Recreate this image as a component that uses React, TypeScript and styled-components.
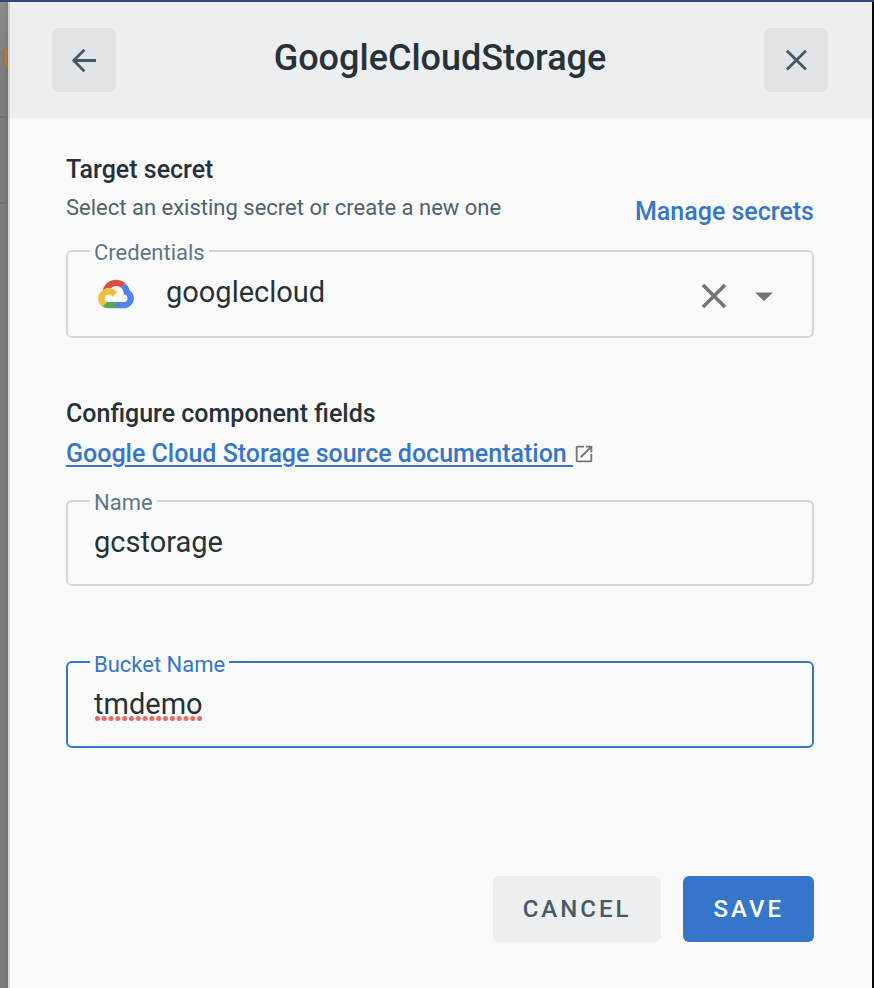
import React, { useState } from 'react';
import styled, { createGlobalStyle } from 'styled-components';

const GlobalStyle = createGlobalStyle`
  *, *::before, *::after { box-sizing: border-box; }
  body {
    margin: 0;
    background: #fafafa;
    color: #263238;
    font-family: Roboto, "Liberation Sans", sans-serif;
  }
  button, input, select { font: inherit; color: inherit; }
`;

const Shell = styled.div`
  display: grid;
  grid-template-columns: 8px minmax(0, 1fr) 2px;
  min-height: 100vh;
  border-top: 2px solid #2b4a78;
`;

const Backdrop = styled.div`
  overflow: hidden;
  background: linear-gradient(90deg, transparent 4px, #00000018), linear-gradient(#8c8c8c, #7c7c7c 80px);
`;

const BackdropRow = styled.div<{ $height: number }>`
  display: flex;
  align-items: center;
  height: ${(p) => p.$height}px;
  padding: 0 0 4px 1px;
  border-bottom: 2px solid #6e6e6e;
  color: #b0742a;
  font-size: 28px;
`;

const Edge = styled.div`
  background: #050505;
`;

const Panel = styled.main`
  background: #fafafa;
  box-shadow: inset 2px 0 #d9d9d9;
`;

const Header = styled.header`
  display: flex;
  align-items: center;
  justify-content: space-between;
  padding: 26px 44px;
  background: #edeef0;
  box-shadow: inset 2px 0 #cfcfd0;
`;

const Title = styled.h1`
  margin: 0;
  padding-bottom: 4px;
  font-size: 36px;
  line-height: 40px;
  font-weight: 500;
`;

const SquareButton = styled.button`
  display: grid;
  place-items: center;
  width: 64px;
  height: 64px;
  padding: 0;
  border: 0;
  border-radius: 6px;
  background: #e0e4e7;
  color: #455a64;
`;

const Form = styled.form`
  padding: 36px 58px 46px;
`;

const SectionHead = styled.div`
  display: flex;
  align-items: flex-end;
  justify-content: space-between;
  margin-bottom: 12px;
`;

const Heading = styled.h2`
  margin: 0;
  font-size: 25px;
  line-height: 32px;
  font-weight: 500;
`;

const Hint = styled.p`
  margin: 6px 0 0;
  color: #4f626d;
  font-size: 22px;
  line-height: 32px;
`;

const Link = styled.a`
  color: #3576cb;
  font-size: 25px;
  line-height: 24px;
  font-weight: 500;
  text-decoration: none;
`;

const DocLine = styled.div`
  display: flex;
  align-items: center;
  margin: 8px 0 16px;
  height: 32px;
  color: #757575;
`;

const DocLink = styled(Link)`
  line-height: 32px;
  white-space: pre;
  text-decoration: underline 2px;
  text-underline-offset: 3px;
`;

const Fieldset = styled.fieldset<{ $active?: boolean }>`
  min-width: 0;
  margin: 0 0 60px;
  padding: 0 25px 0 22px;
  border: 2px solid ${(p) => (p.$active ? '#3576cb' : '#d0d7da')};
  border-radius: 6px;
  color: ${(p) => (p.$active ? '#3576cb' : '#5f7783')};
`;

const Legend = styled.legend<{ $active?: boolean }>`
  padding: ${(p) => (p.$active ? 6 : 4)}px 4px 0;
  font-size: 22px;
  line-height: 26px;
`;

const FieldBody = styled.div`
  display: flex;
  height: 68px;
  padding: 0 4px 16px;
  align-items: center;
  color: #263238;
  font-size: 29px;
`;

const TextInput = styled.input`
  width: 100%;
  height: 34px;
  padding: 0;
  border: 0;
  outline: 0;
  background: none;
`;

const FlaggedInput = styled(TextInput)`
  width: auto;
  field-sizing: content;
  background: radial-gradient(circle, #e8695f 2px, transparent 3px) 0 100% / 7px 5px;
  background-repeat: round no-repeat;
`;

const SelectBody = styled.div`
  display: grid;
  grid-template-columns: 36px minmax(0, 1fr) 40px 40px;
  column-gap: 10px;
  align-items: center;
  height: 70px;
  padding: 0 4px 10px 8px;
  color: #757575;
`;

const Logo = styled.svg`
  grid-area: 1 / 1;
  z-index: 1;
  margin-bottom: 4px;
  pointer-events: none;
`;

const Select = styled.select`
  grid-area: 1 / 1 / 2 / -1;
  height: 48px;
  padding: 0 0 8px 68px;
  border: 0;
  outline: 0;
  appearance: none;
  background: none;
  color: #263238;
  font-size: 29px;
`;

const ClearButton = styled.button`
  grid-area: 1 / 3;
  z-index: 1;
  display: grid;
  padding: 0;
  border: 0;
  background: none;
  color: #757575;
`;

const Caret = styled.svg`
  grid-area: 1 / 4;
  z-index: 1;
  pointer-events: none;
`;

const Actions = styled.div`
  display: flex;
  justify-content: flex-end;
  gap: 22px;
  padding-top: 68px;
`;

const ActionButton = styled.button<{ $primary?: boolean }>`
  height: 66px;
  padding: 0 30px;
  border: 0;
  border-radius: 6px;
  background: ${(p) => (p.$primary ? '#3576cb' : '#edeef0')};
  color: ${(p) => (p.$primary ? '#fff' : '#455a64')};
  font-size: 24px;
  font-weight: 500;
  letter-spacing: 3px;
`;

export default function App() {
  const [secret, setSecret] = useState('googlecloud');
  const [name, setName] = useState('gcstorage');
  const [bucket, setBucket] = useState('tmdemo');

  return (
    <>
      <GlobalStyle />
      <Shell>
        <Backdrop aria-hidden="true">
          <BackdropRow $height={116}>t</BackdropRow>
          <BackdropRow $height={86} />
        </Backdrop>
        <Panel>
          <Header>
            <SquareButton type="button" aria-label="Back">
              <svg width="28" height="28" viewBox="0 0 28 28" fill="none" stroke="currentColor" strokeWidth="2.8" strokeLinejoin="round">
                <path d="M26 14.5H4M14.4 3.7 3.7 14.5 14.4 25.2" />
              </svg>
            </SquareButton>
            <Title>GoogleCloudStorage</Title>
            <SquareButton type="button" aria-label="Close">
              <svg width="28" height="28" viewBox="0 0 28 28" fill="none" stroke="currentColor" strokeWidth="2.8">
                <path d="M4.9 4.7 23.9 23.5M23.9 4.7 4.9 23.5" />
              </svg>
            </SquareButton>
          </Header>
          <Form onSubmit={(e) => e.preventDefault()}>
            <SectionHead>
              <div>
                <Heading>Target secret</Heading>
                <Hint>Select an existing secret or create a new one</Hint>
              </div>
              <Link href="#secrets">Manage secrets</Link>
            </SectionHead>
            <Fieldset>
              <Legend><label htmlFor="credentials">Credentials</label></Legend>
              <SelectBody>
                <Select id="credentials" value={secret} onChange={(e) => setSecret(e.target.value)}>
                  <option value="googlecloud">googlecloud</option>
                  <option value="" />
                </Select>
                <Logo width="36" height="30" viewBox="5 14 118 94">
                  <path fill="#db4f40" d="M80.6 40.3h.4l-.2-.2 14-14v-.3c-11.8-10.4-28.1-14-43.2-9.5C36.5 20.8 24.9 32.8 20.7 48c.2-.1.5-.2.8-.2 5.2-3.4 11.4-5.4 17.9-5.4 2.2 0 4.3.2 6.4.6.1-.1.2-.1.3-.1 9-9.9 24.2-11.1 34.6-2.6h-.1z" />
                  <path fill="#5086ec" d="M108.1 47.8c-2.3-8.5-7.1-16.2-13.8-22.1L80 39.9c6 4.9 9.5 12.3 9.3 20v2.5c16.9 0 16.9 25.2 0 25.2H63.9v20l.1.2h25.3c14.6.1 27.5-9.3 31.8-23.1 4.3-13.8-1-28.8-13-36.9z" />
                  <path fill="#58a65c" d="M39 107.8h25.1V87.6H39c-1.9 0-3.7-.4-5.4-1.1l-15.2 14.8c6 4.3 13.2 6.5 20.6 6.5z" />
                  <path fill="#f2be42" d="M40.2 41.9c-14.9.1-28.1 9.3-32.9 22.8-4.8 13.6 0 28.5 11.8 37.3l15.6-14.9c-8.6-3.7-10.6-14.5-4-20.8 6.6-6.4 17.8-4.4 21.7 3.8L68 55.2C61.4 46.9 51.1 42 40.2 41.9z" />
                </Logo>
                <ClearButton type="button" aria-label="Clear" onClick={() => setSecret('')}>
                  <svg width="42" height="42" viewBox="0 0 24 24" fill="currentColor">
                    <path d="M19 6.41 17.59 5 12 10.59 6.41 5 5 6.41 10.59 12 5 17.59 6.41 19 12 13.41 17.59 19 19 17.59 13.41 12z" />
                  </svg>
                </ClearButton>
                <Caret width="42" height="42" viewBox="0 0 24 24" fill="currentColor">
                  <path d="m7 10 5 5 5-5z" />
                </Caret>
              </SelectBody>
            </Fieldset>
            <Heading>Configure component fields</Heading>
            <DocLine>
              <DocLink href="#docs">{'Google Cloud Storage source documentation '}</DocLink>
              <svg width="22" height="22" viewBox="0 0 24 24" fill="currentColor">
                <path d="M19 19H5V5h7V3H5a2 2 0 0 0-2 2v14a2 2 0 0 0 2 2h14c1.1 0 2-.9 2-2v-7h-2v7zM14 3v2h3.59l-9.83 9.83 1.41 1.41L19 6.41V10h2V3h-7z" />
              </svg>
            </DocLine>
            <Fieldset>
              <Legend><label htmlFor="name">Name</label></Legend>
              <FieldBody>
                <TextInput id="name" value={name} onChange={(e) => setName(e.target.value)} />
              </FieldBody>
            </Fieldset>
            <Fieldset $active>
              <Legend $active><label htmlFor="bucket">Bucket Name</label></Legend>
              <FieldBody>
                <FlaggedInput id="bucket" spellCheck={false} value={bucket} onChange={(e) => setBucket(e.target.value)} />
              </FieldBody>
            </Fieldset>
            <Actions>
              <ActionButton type="button">CANCEL</ActionButton>
              <ActionButton type="submit" $primary>SAVE</ActionButton>
            </Actions>
          </Form>
        </Panel>
        <Edge />
      </Shell>
    </>
  );
}
